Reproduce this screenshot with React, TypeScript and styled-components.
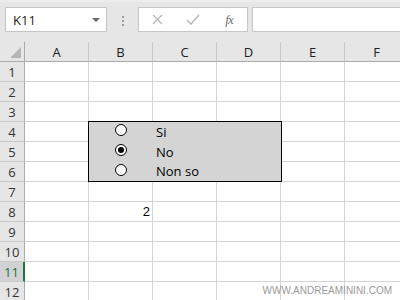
import React from "react";
import styled, { createGlobalStyle } from "styled-components";

const Global = createGlobalStyle`
  html, body { margin: 0; padding: 0; background: #fff; }
  body { width: 400px; height: 300px; overflow: hidden; font-family: "Open Sans", "Noto Sans", sans-serif; }
`;

const Page = styled.div`
  width: 400px;
  height: 300px;
  position: relative;
  overflow: hidden;
  background: #fff;
`;

const Bar = styled.div`
  height: 42px;
  background: #e6e6e6;
  display: flex;
  align-items: flex-start;
  padding: 7px 0 0 5px;
  box-sizing: border-box;
  border-top: 2px solid #ececec;
`;

const NameBox = styled.div`
  width: 102px;
  height: 25px;
  margin-top: -2px;
  background: #fff;
  border: 1px solid #c6c6c6;
  box-sizing: border-box;
  display: flex;
  align-items: center;
  justify-content: space-between;
  padding: 0 6px 0 7px;
  font-size: 13px;
  color: #222;
  font-family: "Open Sans", sans-serif;
`;

const Arrow = styled.span`
  width: 0;
  height: 0;
  border-left: 4px solid transparent;
  border-right: 4px solid transparent;
  border-top: 4px solid #6a6a6a;
`;

const Dots = styled.div`
  width: 31px;
  height: 23px;
  display: flex;
  flex-direction: column;
  align-items: center;
  justify-content: center;
  gap: 2px;
  span { width: 2px; height: 2px; background: #9b9b9b; display: block; }
`;

const FormulaButtons = styled.div`
  width: 110px;
  height: 25px;
  margin-top: -2px;
  background: #fff;
  border: 1px solid #c6c6c6;
  box-sizing: border-box;
  display: flex;
  align-items: center;
  color: #b8b8b8;
`;

const Btn = styled.span<{ $w: number }>`
  width: ${(p) => p.$w}px;
  display: flex;
  justify-content: center;
  align-items: center;
`;

const Fx = styled.span`
  font-family: "Liberation Serif", serif;
  font-style: italic;
  font-size: 13px;
  color: #6f6f6f;
  letter-spacing: -1px;
`;

const FormulaInput = styled.div`
  flex: 1;
  height: 25px;
  margin-top: -2px;
  margin-left: 4px;
  background: #fff;
  border: 1px solid #c6c6c6;
  border-right: none;
  box-sizing: border-box;
`;

const Sheet = styled.div`
  display: grid;
  grid-template-columns: 25px repeat(6, 64px);
  grid-auto-rows: 20px;
  position: relative;
`;

const ColHead = styled.div`
  background: #e6e6e6;
  border-right: 1px solid #c9c9c9;
  border-bottom: 1px solid #ababab;
  box-sizing: border-box;
  display: flex;
  align-items: center;
  justify-content: center;
  font-size: 13px;
  color: #222;
`;

const Corner = styled.div`
  background: #e6e6e6;
  border-right: 1px solid #ababab;
  border-bottom: 1px solid #ababab;
  box-sizing: border-box;
  position: relative;
  &::after {
    content: "";
    position: absolute;
    right: 3px;
    bottom: 3px;
    width: 0;
    height: 0;
    border-left: 11px solid transparent;
    border-bottom: 11px solid #b5b5b5;
  }
`;

const RowHead = styled.div<{ $sel?: boolean }>`
  background: ${(p) => (p.$sel ? "#d2d2d2" : "#e6e6e6")};
  border-right: ${(p) => (p.$sel ? "2px solid #217346" : "1px solid #ababab")};
  border-bottom: 1px solid #c9c9c9;
  box-sizing: border-box;
  display: flex;
  align-items: center;
  justify-content: center;
  font-size: 13px;
  color: ${(p) => (p.$sel ? "#217346" : "#333")};
`;

const Cell = styled.div`
  border-right: 1px solid #d4d4d4;
  border-bottom: 1px solid #d4d4d4;
  box-sizing: border-box;
  display: flex;
  align-items: center;
  justify-content: flex-end;
  padding-right: 2px;
  font-size: 13px;
  color: #000;
  font-family: "Liberation Sans", sans-serif;
`;

const Group = styled.div`
  position: absolute;
  left: 88px;
  top: 79px;
  width: 194px;
  height: 61px;
  background: #d4d4d4;
  border: 1px solid #000;
  box-sizing: border-box;
  display: flex;
  flex-direction: column;
  justify-content: center;
`;

const Option = styled.div`
  height: 20px;
  display: flex;
  align-items: center;
  font-size: 13px;
  color: #000;
`;

const Radio = styled.span<{ $on?: boolean }>`
  width: 12px;
  height: 12px;
  margin-left: 26px;
  margin-right: 29px;
  border-radius: 50%;
  border: 1px solid #000;
  background: #fff;
  box-sizing: border-box;
  display: flex;
  align-items: center;
  justify-content: center;
  margin-top: -3px;
  &::after {
    content: "";
    width: 6px;
    height: 6px;
    border-radius: 50%;
    background: ${(p) => (p.$on ? "#000" : "transparent")};
  }
`;

const Label = styled.span``;

const Watermark = styled.div`
  position: absolute;
  right: 8px;
  top: 286px;
  line-height: 10px;
  font-family: "Liberation Sans", sans-serif;
  font-size: 10px;
  color: #9a9a9a;
  white-space: nowrap;
`;

const cols = ["A", "B", "C", "D", "E", "F"];
const rows = Array.from({ length: 12 }, (_, i) => i + 1);

export default function App() {
  return (
    <Page>
      <Global />
      <Bar>
        <NameBox>
          <span>K11</span>
          <Arrow />
        </NameBox>
        <Dots>
          <span />
          <span />
          <span />
        </Dots>
        <FormulaButtons>
          <Btn $w={36}>
            <svg width="11" height="11" viewBox="0 0 11 11">
              <path d="M1 1L10 10M10 1L1 10" stroke="#b8b8b8" strokeWidth="1.3" />
            </svg>
          </Btn>
          <Btn $w={36}>
            <svg width="14" height="11" viewBox="0 0 14 11">
              <path d="M1 6L5 10L13 1" stroke="#b8b8b8" strokeWidth="1.5" fill="none" />
            </svg>
          </Btn>
          <Btn $w={36}>
            <Fx>fx</Fx>
          </Btn>
        </FormulaButtons>
        <FormulaInput />
      </Bar>
      <Sheet>
        <Corner />
        {cols.map((c) => (
          <ColHead key={c}>{c}</ColHead>
        ))}
        {rows.map((r) => (
          <React.Fragment key={r}>
            <RowHead $sel={r === 11}>{r}</RowHead>
            {cols.map((c) => (
              <Cell key={c}>{r === 8 && c === "B" ? "2" : ""}</Cell>
            ))}
          </React.Fragment>
        ))}
        <Group>
          <Option>
            <Radio />
            <Label>Si</Label>
          </Option>
          <Option>
            <Radio $on />
            <Label>No</Label>
          </Option>
          <Option>
            <Radio />
            <Label>Non so</Label>
          </Option>
        </Group>
      </Sheet>
      <Watermark>WWW.ANDREAMININI.COM</Watermark>
    </Page>
  );
}
